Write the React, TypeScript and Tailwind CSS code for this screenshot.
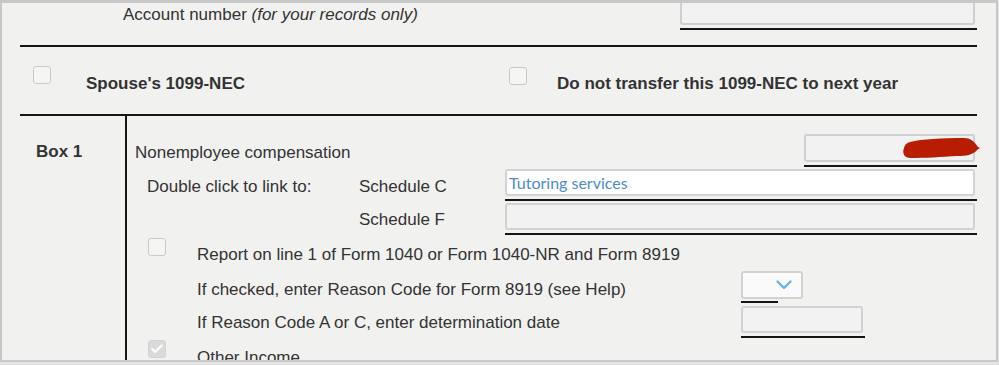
import { Check } from "lucide-react"

function Box({ checked = false }: { checked?: boolean }) {
  if (checked) {
    return (
      <div className="w-[18px] h-[18px] rounded-[3px] border border-[#d2d2d2] bg-[#dadada] flex items-center justify-center shrink-0">
        <Check size={14} strokeWidth={3.5} className="text-white" />
      </div>
    )
  }
  return <div className="w-[18px] h-[18px] rounded-[3px] border border-[#c9c9c9] bg-[#f5f5f4] shrink-0" />
}

function Underline({ w }: { w: string }) {
  return <div className={`h-[2px] bg-[#151515] ${w}`} />
}

function Rule() {
  return <div className="h-[2px] w-[957px] bg-[#151515]" />
}

export default function App() {
  return (
    <div className="w-[999px] h-[365px] bg-[#e4e4e4] overflow-hidden font-['Liberation_Sans',Arial,sans-serif] text-[17px] leading-[20px] text-[#333]">
      <div className="w-[998px] h-[362px] border-2 border-t-[3px] border-[#c8c8c8] bg-[#f1f1f0] overflow-hidden pl-[18px]">
        {/* Account number */}
        <div className="w-[957px] h-[42px] flex items-start">
          <div className="ml-[103px] mt-[2px]">
            Account number <span className="italic">(for your records only)</span>
          </div>
          <div className="ml-auto w-[297px] -mt-[8px]">
            <div className="w-[295px] h-[30px] rounded-[3px] border-2 border-[#cfcfcf] bg-[#f2f2f2]" />
            <div className="mt-[3px]">
              <Underline w="w-[297px]" />
            </div>
          </div>
        </div>
        <Rule />

        {/* Spouse / transfer */}
        <div className="h-[67px] flex items-start">
          <div className="w-[489px] flex items-start">
            <div className="ml-[13px] mt-[19px]">
              <Box />
            </div>
            <div className="ml-[35px] mt-[27px] font-bold">Spouse's 1099-NEC</div>
          </div>
          <div className="flex items-start">
            <div className="mt-[20px]">
              <Box />
            </div>
            <div className="ml-[30px] mt-[27px] font-bold">Do not transfer this 1099-NEC to next year</div>
          </div>
        </div>
        <Rule />

        {/* Box 1 */}
        <div className="flex h-[260px]">
          <div className="w-[105px] pl-[16px] pt-[26px] font-bold">Box 1</div>
          <div className="w-[852px] border-l-2 border-[#151515]">
            <div className="flex items-start justify-between">
              <div className="ml-[8px] mt-[27px]">Nonemployee compensation</div>
              <div className="mt-[18px] w-[173px] relative">
                <div className="w-[171px] h-[28px] rounded-[3px] border-2 border-[#cfcfcf] bg-[#f2f2f2]" />
                <div className="mt-[3px]">
                  <Underline w="w-[173px]" />
                </div>
                <svg className="absolute left-[98px] top-[2px]" width="80" height="24" viewBox="0 0 80 24">
                  <path
                    d="M8 6 C 20 3, 40 2, 62 2 C 68 2, 72 5, 76 11 L 78 12 L 75 14 C 71 19, 64 20, 55 20 C 40 21, 22 22, 9 22 C 2 22, 0 17, 2 12 C 3 8, 5 7, 8 6 Z"
                    fill="#b81c02"
                  />
                </svg>
              </div>
            </div>

            <div className="mt-[2px] flex items-start">
              <div className="w-[212px] ml-[20px] mt-[8px]">Double click to link to:</div>
              <div className="w-[146px] mt-[8px]">Schedule C</div>
              <div className="w-[472px]">
                <div className="w-[470px] h-[27px] rounded-[3px] border-2 border-[#d2d2d2] bg-white pl-[2px] font-['Lato',sans-serif] text-[16px] leading-[23px] text-[#4b8cc6]">
                  Tutoring services
                </div>
                <div className="mt-[3px]">
                  <Underline w="w-[472px]" />
                </div>
              </div>
            </div>

            <div className="mt-[2px] flex items-start">
              <div className="w-[146px] ml-[232px] mt-[7px]">Schedule F</div>
              <div className="w-[472px]">
                <div className="w-[470px] h-[27px] rounded-[3px] border-2 border-[#d2d2d2] bg-[#f2f2f2]" />
                <div className="mt-[3px]">
                  <Underline w="w-[472px]" />
                </div>
              </div>
            </div>

            <div className="h-[36px] flex items-start">
              <div className="ml-[21px] mt-[3px]">
                <Box />
              </div>
              <div className="ml-[31px] mt-[10px]">Report on line 1 of Form 1040 or Form 1040-NR and Form 8919</div>
            </div>

            <div className="flex items-start">
              <div className="w-[544px] ml-[70px] mt-[9px]">If checked, enter Reason Code for Form 8919 (see Help)</div>
              <div>
                <div className="w-[62px] h-[28px] rounded-[3px] border-2 border-[#d2d2d2] bg-[#fafafa] flex items-center justify-end pr-[9px]">
                  <svg width="16" height="10" viewBox="0 0 16 10">
                    <polyline points="1.5,1.5 8,8 14.5,1.5" fill="none" stroke="#5db0ef" strokeWidth="2.2" strokeLinecap="round" strokeLinejoin="round" />
                  </svg>
                </div>
                <div className="mt-[2px]">
                  <Underline w="w-[37px]" />
                </div>
              </div>
            </div>

            <div className="mt-[3px] flex items-start">
              <div className="w-[544px] ml-[70px] mt-[7px]">If Reason Code A or C, enter determination date</div>
              <div>
                <div className="w-[122px] h-[27px] rounded-[3px] border-2 border-[#d2d2d2] bg-[#f2f2f2]" />
                <div className="mt-[3px]">
                  <Underline w="w-[124px]" />
                </div>
              </div>
            </div>

            <div className="flex items-start">
              <div className="ml-[21px] mt-[2px]">
                <Box checked />
              </div>
              <div className="ml-[31px] mt-[10px]">Other Income</div>
            </div>
          </div>
        </div>
      </div>
    </div>
  )
}
